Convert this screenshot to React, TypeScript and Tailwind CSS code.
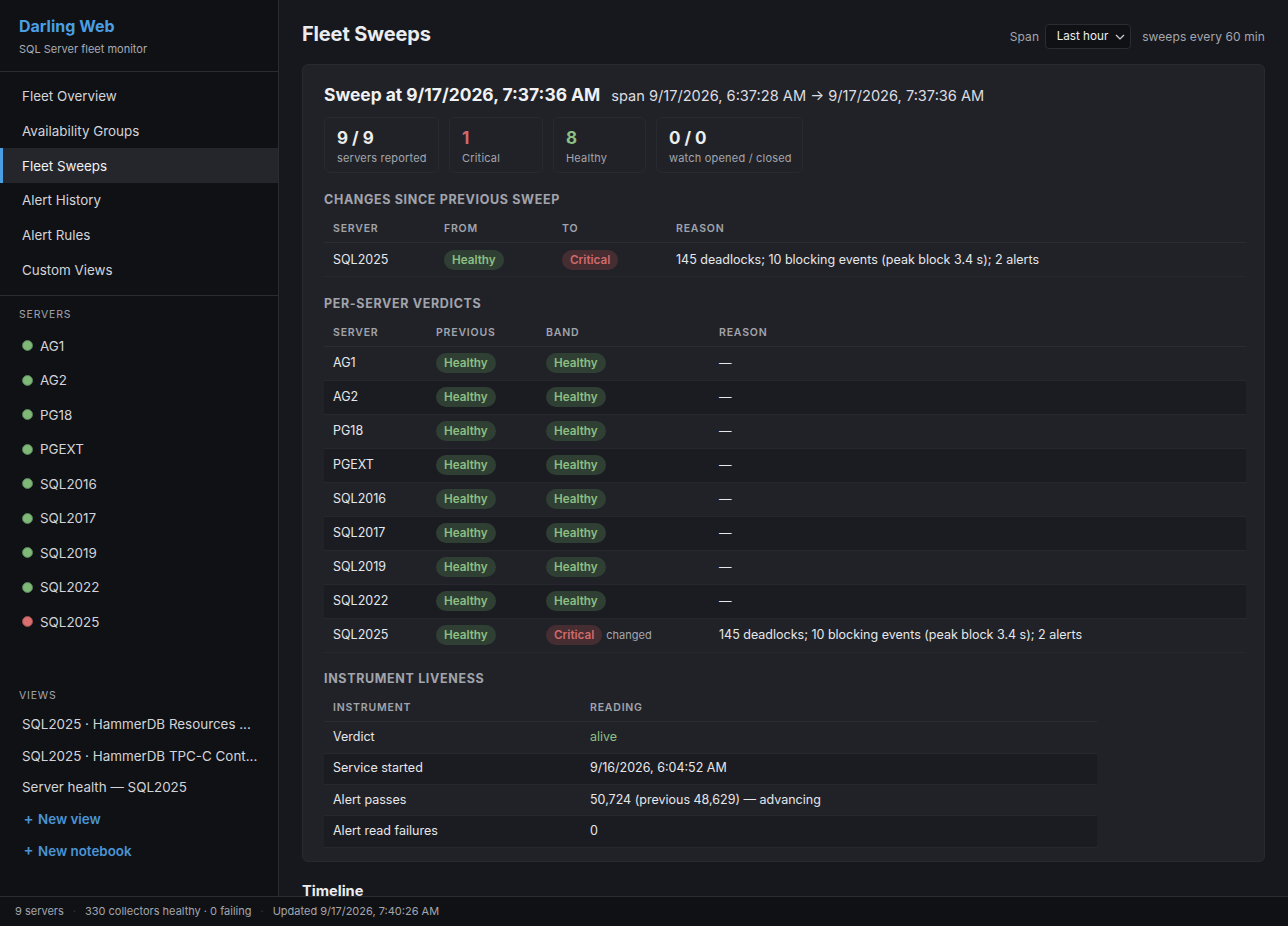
import React from "react";

const nav = ["Fleet Overview", "Availability Groups", "Fleet Sweeps", "Alert History", "Alert Rules", "Custom Views"];
const servers = ["AG1", "AG2", "PG18", "PGEXT", "SQL2016", "SQL2017", "SQL2019", "SQL2022", "SQL2025"];
const reason = "145 deadlocks; 10 blocking events (peak block 3.4 s); 2 alerts";

function Badge({ kind }: { kind: "Healthy" | "Critical" }) {
  return (
    <span
      className={
        "inline-block rounded-full px-[8px] py-[2px] text-[11.7px] leading-[16px] font-semibold " +
        (kind === "Healthy" ? "bg-[#2f3f33] text-[#8cc084]" : "bg-[#452d31] text-[#d06a6c]")
      }
    >
      {kind}
    </span>
  );
}

function Stat({ value, label, color, w }: { value: string; label: string; color: string; w: string }) {
  return (
    <div className={"h-[56px] rounded-md border border-[#292a30] px-[12px] pt-[9px] " + w}>
      <div className={"text-[17px] leading-[22px] font-bold " + color}>{value}</div>
      <div className="text-[11px] leading-[18px] tracking-[0.2px] whitespace-nowrap text-[#a3a6ad]">{label}</div>
    </div>
  );
}

function Section({ children, className }: { children: React.ReactNode; className: string }) {
  return <h3 className={"text-[12.5px] leading-[16px] font-bold tracking-[0.65px] text-[#a1a4ac] uppercase " + className}>{children}</h3>;
}

function Th({ children, w }: { children?: React.ReactNode; w?: string }) {
  return (
    <th className={"border-b border-[#2a2c32] px-[9px] text-left text-[10.5px] font-semibold tracking-[0.8px] text-[#a1a4ac] uppercase " + (w ?? "")}>
      {children}
    </th>
  );
}

function Td({ children }: { children: React.ReactNode }) {
  return <td className="border-b border-[#26282d] px-[9px] text-[12.5px] text-[#e6e7ea]">{children}</td>;
}

export default function App() {
  return (
    <div className="flex h-[926px] flex-col overflow-hidden bg-[#17181d] font-['Inter','Liberation_Sans',sans-serif] text-[#e6e7ea]">
      <div className="flex min-h-0 flex-1">
        <aside className="flex w-[279px] shrink-0 flex-col border-r border-[#2a2c32] bg-[#101115]">
          <div className="h-[72px] border-b border-[#2a2c32] px-[19px] pt-[16px]">
            <div className="text-[16px] leading-[20px] font-bold text-[#4a9fe3]">Darling Web</div>
            <div className="mt-[3px] text-[11px] leading-[20px] text-[#a9acb3]">SQL Server fleet monitor</div>
          </div>
          <nav className="flex h-[224px] flex-col border-b border-[#2a2c32] pt-[7px]">
            {nav.map((n) => (
              <div
                key={n}
                className={
                  "flex h-[34.7px] items-center text-[13.4px] " +
                  (n === "Fleet Sweeps" ? "border-l-[3px] border-[#4a9fe3] bg-[#24262c] pl-[19px] text-[#f0f1f3]" : "pl-[22px] text-[#d2d4d9]")
                }
              >
                {n}
              </div>
            ))}
          </nav>
          <div className="px-[19px] pt-[11px] text-[10.5px] leading-[16px] tracking-[0.8px] text-[#a1a4ac]">SERVERS</div>
          <div className="mt-[5.5px] flex flex-col">
            {servers.map((s) => (
              <div key={s} className="flex h-[34.5px] items-center pl-[22px] text-[13.4px] text-[#d2d4d9]">
                <span className={"mr-[7px] h-[11px] w-[11px] rounded-full border-[1.5px] " + (s === "SQL2025" ? "border-[#96504f] bg-[#d9706f]" : "border-[#55805a] bg-[#7fb877]")} />
                {s}
              </div>
            ))}
          </div>
          <div className="mt-[48.5px] px-[19px] text-[10.5px] leading-[16px] tracking-[0.8px] text-[#a1a4ac]">VIEWS</div>
          <div className="mt-[5px] flex flex-col">
            {["SQL2025 · HammerDB Resources ...", "SQL2025 · HammerDB TPC-C Cont...", "Server health — SQL2025"].map((v) => (
              <div key={v} className="flex h-[31.6px] items-center pl-[22px] text-[13.4px] whitespace-nowrap text-[#d2d4d9]">{v}</div>
            ))}
            {["New view", "New notebook"].map((v) => (
              <div key={v} className="flex h-[31.6px] items-center pl-[23.5px] text-[13.4px] font-semibold text-[#4a94d4]">
                <span className="mr-[5.5px] w-[9px] text-[15px]">+</span>{v}
              </div>
            ))}
          </div>
        </aside>
        <main className="min-w-0 flex-1 overflow-hidden pr-[23px] pl-[23px]">
          <div className="flex h-[64px] items-start justify-between pt-[20px]">
            <h1 className="text-[20px] leading-[28px] font-bold tracking-[-0.15px] text-[#ebecef]">Fleet Sweeps</h1>
            <div className="flex items-center pt-[4px] text-[12px] tracking-[0.1px] text-[#a3a6ad]">
              <span>Span</span>
              <div className="mr-[11px] ml-[6px] flex h-[25px] w-[86px] items-center justify-between rounded-[4px] border border-[#2a2c32] bg-[#101115] pr-[5px] pl-[10.5px] text-[#eceded]">
                <span className="pt-[1px] text-[11.7px] tracking-normal">Last hour</span>
                <svg width="10" height="6" viewBox="0 0 10 6" fill="none" stroke="#d2d4d9" strokeWidth="1.2"><path d="M1 1l4 4 4-4" /></svg>
              </div>
              <span>sweeps every 60 min</span>
            </div>
          </div>
          <section className="h-[798px] rounded-md border border-[#292a30] bg-[#212228] px-[21px] pt-[17.5px]">
            <div className="flex items-baseline">
              <h2 className="text-[17.4px] leading-[24px] font-bold text-[#f0f1f3]">Sweep at 9/17/2026, 7:37:36 AM</h2>
              <span className="ml-[11px] text-[14.6px] text-[#dcdde0]">span 9/17/2026, 6:37:28 AM → 9/17/2026, 7:37:36 AM</span>
            </div>
            <div className="mt-[9.5px] flex gap-[10px]">
              <Stat value="9 / 9" label="servers reported" color="text-[#eceded]" w="w-[115px]" />
              <Stat value="1" label="Critical" color="text-[#d06a6c]" w="w-[94px]" />
              <Stat value="8" label="Healthy" color="text-[#8cc084]" w="w-[93px]" />
              <Stat value="0 / 0" label="watch opened / closed" color="text-[#eceded]" w="w-[147px]" />
            </div>
            <Section className="mt-[19px]">Changes since previous sweep</Section>
            <table className="mt-[8px] w-[922px] table-fixed border-collapse">
              <thead>
                <tr className="h-[27px]"><Th w="w-[111px]">Server</Th><Th w="w-[118px]">From</Th><Th w="w-[114px]">To</Th><Th>Reason</Th></tr>
              </thead>
              <tbody>
                <tr className="h-[34px]"><Td>SQL2025</Td><Td><Badge kind="Healthy" /></Td><Td><Badge kind="Critical" /></Td><Td>{reason}</Td></tr>
              </tbody>
            </table>
            <Section className="mt-[19px]">Per-server verdicts</Section>
            <table className="mt-[7px] w-[922px] table-fixed border-collapse">
              <thead>
                <tr className="h-[27px]"><Th w="w-[103px]">Server</Th><Th w="w-[110px]">Previous</Th><Th w="w-[173px]">Band</Th><Th>Reason</Th></tr>
              </thead>
              <tbody>
                {servers.map((s, i) => (
                  <tr key={s} className={"h-[34px] " + (i % 2 === 1 ? "bg-[#1b1c21]" : "")}>
                    <Td>{s}</Td>
                    <Td><Badge kind="Healthy" /></Td>
                    <Td>
                      {s === "SQL2025" ? (
                        <><Badge kind="Critical" /><span className="ml-[4px] text-[11px] text-[#a3a6ad]">changed</span></>
                      ) : <Badge kind="Healthy" />}
                    </Td>
                    <Td>{s === "SQL2025" ? reason : "—"}</Td>
                  </tr>
                ))}
              </tbody>
            </table>
            <Section className="mt-[18px]">Instrument liveness</Section>
            <table className="mt-[7px] w-[773px] table-fixed border-collapse">
              <thead>
                <tr className="h-[28px]"><Th w="w-[257px]">Instrument</Th><Th>Reading</Th></tr>
              </thead>
              <tbody>
                {[
                  ["Verdict", "alive"],
                  ["Service started", "9/16/2026, 6:04:52 AM"],
                  ["Alert passes", "50,724 (previous 48,629) — advancing"],
                  ["Alert read failures", "0"],
                ].map(([a, b], i) => (
                  <tr key={a} className={"h-[31.3px] " + (i % 2 === 1 ? "bg-[#1b1c21]" : "")}>
                    <Td>{a}</Td>
                    <Td>{b === "alive" ? <span className="text-[#8cc084]">alive</span> : b}</Td>
                  </tr>
                ))}
              </tbody>
            </table>
          </section>
          <h2 className="mt-[19px] text-[14.6px] leading-[20px] font-bold text-[#ebecef]">Timeline</h2>
        </main>
      </div>
      <footer className="flex h-[30px] shrink-0 items-center border-t border-[#2a2c32] bg-[#101115] pb-[1px] pl-[15px] text-[11px] text-[#a3a6ad]">
        <span>9 servers</span>
        <span className="mx-[9px] text-[#33353b]">·</span>
        <span>330 collectors healthy · 0 failing</span>
        <span className="mx-[9px] text-[#33353b]">·</span>
        <span>Updated 9/17/2026, 7:40:26 AM</span>
      </footer>
    </div>
  );
}
